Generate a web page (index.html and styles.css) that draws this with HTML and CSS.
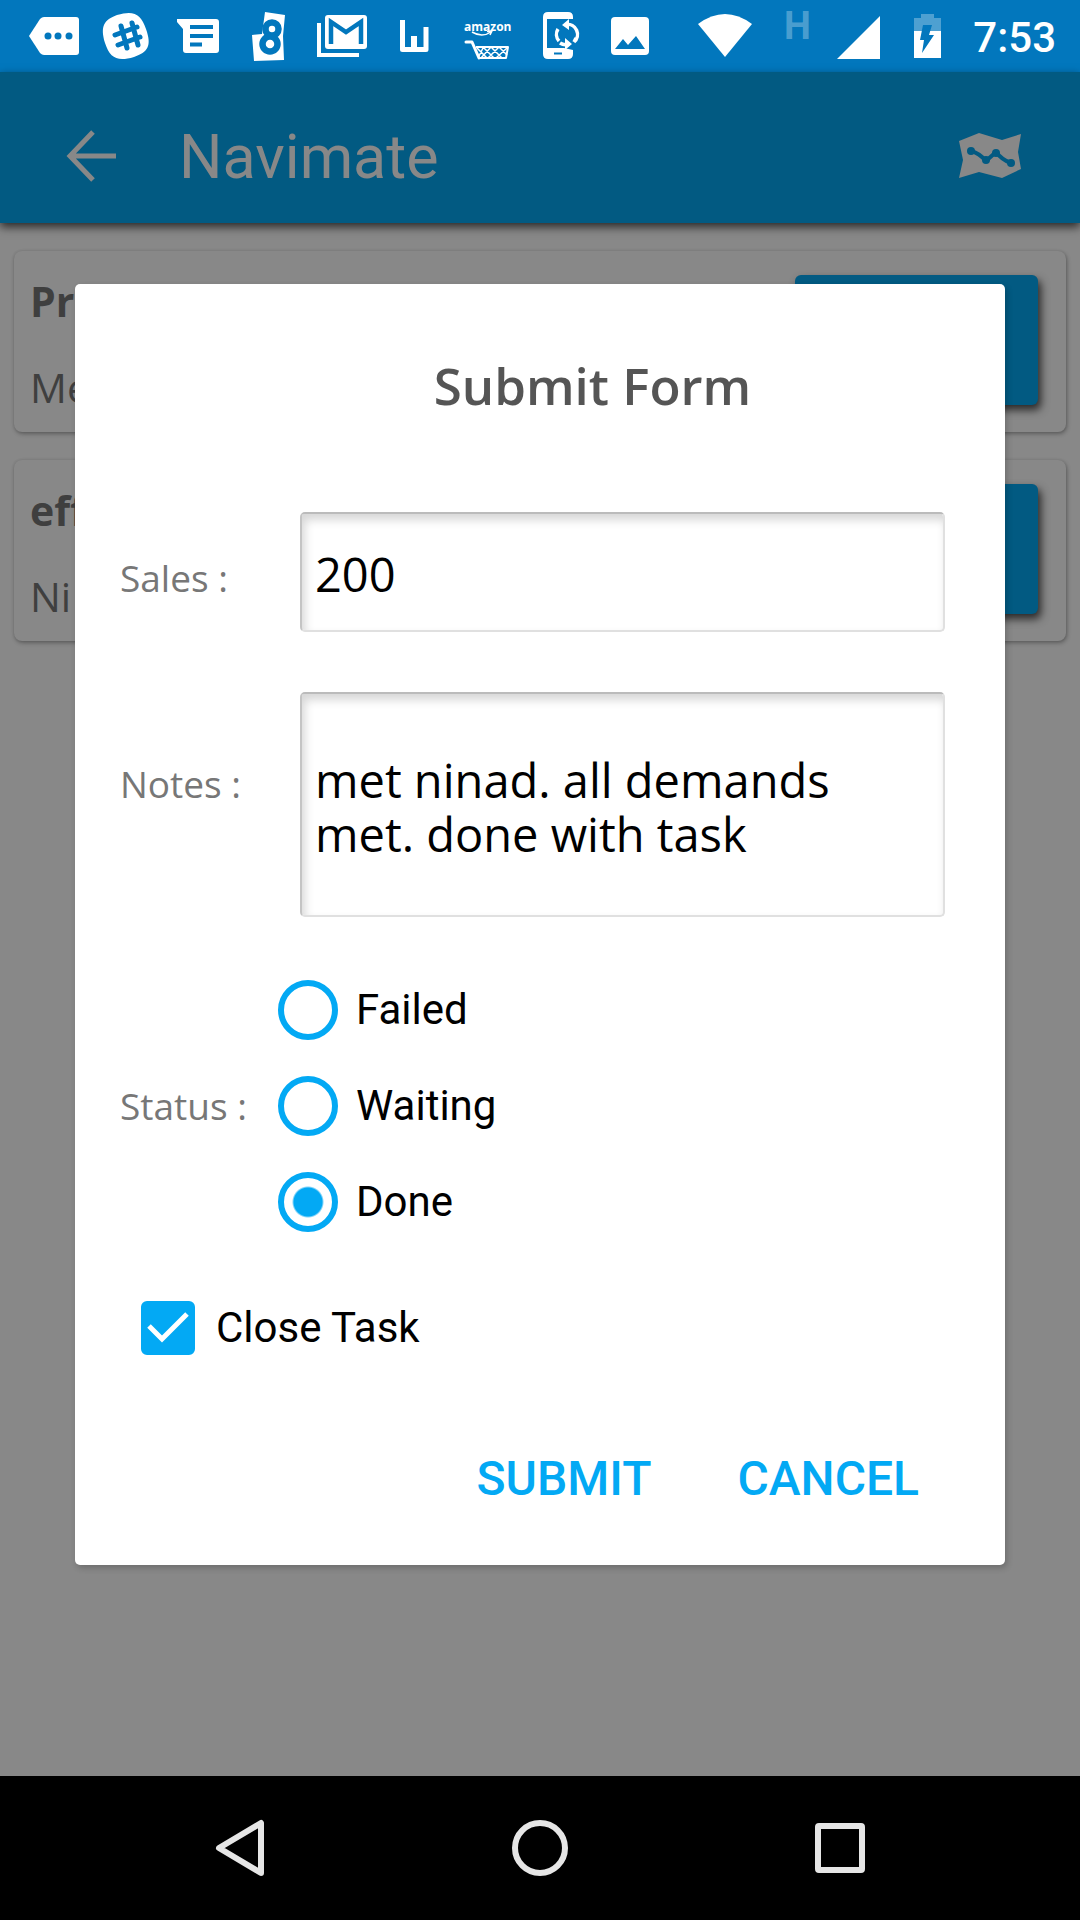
FILE: index.html
```html
<!DOCTYPE html>
<html lang="en">
<head>
<meta charset="utf-8">
<meta name="viewport" content="width=device-width, initial-scale=1">
<title>Navimate</title>
<link rel="stylesheet" href="styles.css">
</head>
<body>
<div class="screen">
  <header class="status-bar">
    <div class="notifications">
      <svg viewBox="0 0 72 72" aria-hidden="true"><path fill="#fff" d="M11 36 22 19q2-2 4-2H58q3 0 3 3V52q0 3-3 3H26q-2 0-4-2z"/><g class="bar-fill"><circle cx="30" cy="36" r="3.500"/><circle cx="40" cy="36" r="3.500"/><circle cx="51" cy="36" r="3.500"/></g></svg>
      <svg viewBox="0 0 72 72" aria-hidden="true"><path fill="#fff" d="M27 15c17-5 24-1 29 14 6 17 2 23-12 28-17 5-24 1-29-14-5-17-1-23 12-28z"/><path class="bar-line" stroke-width="5" stroke-linecap="round" d="M31 26 37 48M42 23 48 45M25 35 47 27M28 45 50 37"/></svg>
      <svg viewBox="0 0 72 72" aria-hidden="true"><path fill="#fff" d="M15 19H54q3 0 3 3V50q0 3-3 3H24q-3 0-3-3V29L15 22z"/><path class="bar-line" stroke-width="4" d="M28 27H51M28 36H51M28 44.500H40"/></svg>
      <svg viewBox="0 0 72 72" aria-hidden="true"><path fill="#fff" d="M31 12 51 15 49 36 50 60 20 61 18 35 28 34z"/><g class="bar-line" stroke-width="6.500"><circle cx="38" cy="29" r="6.500"/><circle cx="36" cy="44" r="7.500"/></g></svg>
      <svg viewBox="0 0 72 72" aria-hidden="true"><path fill="none" stroke="#fff" stroke-width="4" d="M13 23V55H53"/><rect x="19" y="15" width="42" height="34" rx="3" fill="#fff"/><path class="bar-line" stroke-width="4.500" d="M25 44V22L40 32 55 22V44"/></svg>
      <svg viewBox="0 0 72 72" aria-hidden="true"><path fill="none" stroke="#fff" stroke-width="5" stroke-linejoin="round" d="M24.500 20V49.500H48V27"/><path fill="#fff" d="M33 36H39V47H33z"/></svg>
      <svg viewBox="0 0 72 72" aria-hidden="true"><text class="store-name" x="14" y="31" fill="#fff">amazon</text><path fill="none" stroke="#fff" stroke-width="1.500" d="M22 32Q32 38 41 32M37 31.500 42 31 40 35"/><path fill="none" stroke="#fff" stroke-width="3" stroke-linecap="round" stroke-linejoin="round" d="M16 42H22L29 58"/><path fill="none" stroke="#fff" stroke-width="2" stroke-linejoin="round" d="M29 58H56L58 47H26"/><path fill="none" stroke="#fff" stroke-width="1.500" d="M27 48 37 58M33 47 44 58M41 47 52 58M49 47 57 55M33 48 29 56M41 47 31 58M49 47 38 58M57 48 46 58"/></svg>
      <svg viewBox="0 0 72 72" aria-hidden="true"><path fill="#fff" d="M26 12H46q5 0 5 5V19H43V19H25V48H42L51 50V54q0 5-5 5H26q-5 0-5-5V17q0-5 5-5z"/><path class="bar-line" stroke-width="2" d="M32 53.500H40"/><path fill="none" stroke="#fff" stroke-width="3.500" d="M37 41A10 10 0 0 1 36 29M44 24.500A10 10 0 0 1 52 42M46 44.500A10 10 0 0 1 38 43M52 42 54 38"/><path fill="#fff" d="M40 25 47 19V30zM50 44 43 38V50z"/></svg>
      <svg viewBox="0 0 72 72" aria-hidden="true"><rect x="17" y="17" width="38" height="38" rx="4" fill="#fff"/><path class="bar-fill" d="M21 49 29 39 34 45 42 36 51 49z"/></svg>
    </div>
    <div class="system">
      <svg viewBox="0 0 72 72" aria-hidden="true"><path fill="#fff" d="M9 24Q36 4 63 24L36 57z"/></svg>
      <span class="network">H</span>
      <svg class="signal" viewBox="0 0 54 72" aria-hidden="true"><path fill="#fff" d="M47 16V59H4z"/></svg>
      <svg viewBox="0 0 72 72" aria-hidden="true"><path fill="#fff" fill-opacity=".3" d="M27 18H34V14H47V18H54V31H27z"/><path fill="#fff" d="M27 31H54V58H27z"/><path class="bar-fill" d="M36 25H45L42 35H47L35 53 37 40H33z"/></svg>
      <time class="clock">7:53</time>
    </div>
  </header>

  <div class="app">
    <div class="app-bar">
      <button class="icon-button" type="button" aria-label="Back"><svg viewBox="0 0 52 52" width="52" height="52" aria-hidden="true"><path fill="none" stroke="#888" stroke-width="5" d="M51 26H5M28 2 5 26 28 50"/></svg></button>
      <h1 class="app-title">Navimate</h1>
      <button class="icon-button" type="button" aria-label="Map"><svg viewBox="0 0 62 46" width="62" height="46" aria-hidden="true"><path fill="#888" d="M0 8 20 0 43 7 62 1 59 19 62 36 43 45 20 39 0 45 4 27z"/><g fill="none" stroke="#025a82" stroke-width="4" stroke-linejoin="round"><path d="M12 18Q20 20 27 28L37 19Q43 27 52 30"/></g><g fill="#025a82"><circle cx="12" cy="18" r="4"/><circle cx="27" cy="27" r="4"/><circle cx="37" cy="20" r="4"/><circle cx="52" cy="30" r="4"/></g></svg></button>
    </div>
    <main class="tasks">
      <article class="task">
        <div class="task-text"><h2 class="task-name">Pra</h2><p class="task-contact">Me</p></div>
        <button class="task-action" type="button" aria-label="Submit"></button>
      </article>
      <article class="task">
        <div class="task-text"><h2 class="task-name">eff</h2><p class="task-contact">Ni</p></div>
        <button class="task-action" type="button" aria-label="Submit"></button>
      </article>
    </main>

    <div class="overlay">
      <form class="dialog" role="dialog" aria-labelledby="dialog-title">
        <h2 class="dialog-title" id="dialog-title">Submit Form</h2>
        <div class="fields">
          <div class="field field-sales">
            <label class="field-label" for="sales">Sales :</label>
            <input class="field-box" id="sales" type="text" value="200">
          </div>
          <div class="field field-notes">
            <label class="field-label" for="notes">Notes :</label>
            <textarea class="field-box" id="notes" rows="2">met ninad. all demands met. done with task</textarea>
          </div>
        </div>
        <div class="status" role="radiogroup" aria-labelledby="status-label">
          <span class="field-label" id="status-label">Status :</span>
          <div class="options">
            <label class="option"><input class="radio" type="radio" name="status">Failed</label>
            <label class="option"><input class="radio" type="radio" name="status">Waiting</label>
            <label class="option"><input class="radio" type="radio" name="status" checked>Done</label>
          </div>
        </div>
        <label class="option close-task">
          <span class="check"><input class="check-input" type="checkbox" checked><svg class="check-mark" viewBox="0 0 54 54" aria-hidden="true"><path fill="none" stroke="#fff" stroke-width="5" d="M8 25 21 38 46 13"/></svg></span>Close Task
        </label>
        <div class="actions">
          <button class="action" type="submit">SUBMIT</button>
          <button class="action" type="button">CANCEL</button>
        </div>
      </form>
    </div>
  </div>

  <nav class="nav-bar">
    <button class="nav-button" type="button" aria-label="Back"><svg viewBox="0 0 60 60" width="60" height="60" aria-hidden="true"><path fill="none" stroke="#e6e6e6" stroke-width="6" stroke-linejoin="round" d="M51 5V55L9 30z"/></svg></button>
    <button class="nav-button" type="button" aria-label="Home"><svg viewBox="0 0 60 60" width="60" height="60" aria-hidden="true"><circle cx="30" cy="30" r="25" fill="none" stroke="#e6e6e6" stroke-width="6"/></svg></button>
    <button class="nav-button" type="button" aria-label="Recent apps"><svg viewBox="0 0 60 60" width="60" height="60" aria-hidden="true"><rect x="8" y="8" width="44" height="44" rx="1" fill="none" stroke="#e6e6e6" stroke-width="6" stroke-linejoin="round"/></svg></button>
  </nav>
</div>
</body>
</html>
```
FILE: styles.css
```css
:root {
  --bar: #0277bd;
  --accent: #03a9f4;
  --accent-dim: #025a82;
  --surface-dim: #888;
  --text-dim: #3f3f3f;
}

* { box-sizing: border-box; }

body {
  margin: 0;
  font-family: Roboto, sans-serif;
}

h1, h2, p { margin: 0; }

button {
  border: 0;
  padding: 0;
  background: none;
  font-family: inherit;
}

svg { display: block; }

.screen {
  display: flex;
  flex-direction: column;
  min-height: 100vh;
}

/* Status bar */
.status-bar {
  display: flex;
  justify-content: space-between;
  height: 72px;
  padding: 0 24px 0 18px;
  background: var(--bar);
  color: #fff;
}

.notifications, .system { display: flex; }
.status-bar svg { width: 72px; height: 72px; }
.status-bar .signal { width: 54px; }
.bar-fill { fill: var(--bar); }
.bar-line { fill: none; stroke: var(--bar); }
.store-name { font: bold 12px "Open Sans", sans-serif; }

.network {
  width: 72px;
  color: rgba(255, 255, 255, .3);
  font-size: 38px;
  font-weight: 700;
  line-height: 52px;
  text-align: center;
}

.clock {
  padding-left: 14px;
  font-size: 42px;
  font-weight: 500;
  line-height: 75px;
}

/* App behind the dialog */
.app {
  position: relative;
  display: flex;
  flex: 1;
  flex-direction: column;
  background: var(--surface-dim);
}

.app-bar {
  display: flex;
  align-items: center;
  height: 151px;
  padding: 16px 59px 0 65px;
  background: var(--accent-dim);
  box-shadow: 0 4px 9px rgba(0, 0, 0, .7);
}

.app-title {
  flex: 1;
  padding: 2px 0 0 62px;
  color: var(--surface-dim);
  font-size: 61px;
  font-weight: 400;
}

.tasks {
  display: flex;
  flex-direction: column;
  gap: 28px;
  padding: 28px 14px;
}

.task {
  display: flex;
  justify-content: space-between;
  height: 181px;
  padding: 24px 28px 0 16px;
  border-radius: 8px;
  box-shadow: 1px 2px 4px rgba(0, 0, 0, .3), 0 0 3px rgba(0, 0, 0, .1);
}

.task-text {
  color: var(--text-dim);
  font-family: "Open Sans", sans-serif;
  font-size: 41px;
  line-height: 52px;
}

.task-name {
  padding-bottom: 34px;
  font-size: inherit;
  font-weight: 700;
}

.task-action {
  width: 243px;
  height: 130px;
  border-radius: 6px;
  background: var(--accent-dim);
  box-shadow: 3px 5px 9px rgba(0, 0, 0, .7);
}

/* Dialog */
.overlay {
  position: absolute;
  inset: 0;
  display: grid;
  align-items: center;
  padding: 0 75px;
}

.dialog {
  padding: 65px 60px 38px 45px;
  border-radius: 5px;
  background: #fff;
  box-shadow: 2px 3px 6px rgba(0, 0, 0, .2);
}

.dialog-title {
  padding-left: 120px;
  color: #555;
  font-family: "Open Sans", sans-serif;
  font-size: 51px;
  font-weight: 600;
  line-height: 72px;
  text-align: center;
}

.fields {
  display: grid;
  gap: 60px;
  padding: 91px 0 45px;
}

.field {
  display: grid;
  grid-template-columns: 180px 1fr;
  align-items: start;
}

.field-label {
  color: #777;
  font-family: "Open Sans", sans-serif;
  font-size: 37px;
  line-height: 62px;
}

.field-box {
  display: block;
  width: 100%;
  padding: 0 30px 0 13px;
  border: 2px solid #e0e0e0;
  border-top-color: #bbb;
  border-left-color: #c4c4c4;
  border-radius: 5px;
  background: #fff;
  box-shadow: inset 3px 6px 10px rgba(0, 0, 0, .16);
  color: #000;
  font-family: "Open Sans", sans-serif;
  font-size: 47px;
  line-height: 54px;
  resize: none;
  overflow: hidden;
}

.field-sales .field-label { padding-top: 35px; }
.field-sales .field-box { height: 120px; padding-top: 4px; }
.field-notes .field-label { padding-top: 61px; }
.field-notes .field-box { height: 225px; padding-top: 59px; }

.status {
  display: grid;
  grid-template-columns: 158px 1fr;
  align-items: center;
}

.option {
  display: flex;
  align-items: center;
  gap: 18px;
  height: 96px;
  color: #000;
  font-size: 42px;
}

.radio {
  appearance: none;
  width: 60px;
  height: 60px;
  margin: 0;
  border: 6px solid var(--accent);
  border-radius: 50%;
}

.radio:checked {
  background: radial-gradient(circle, var(--accent) 14px, transparent 16px);
}

.close-task {
  gap: 21px;
  margin-top: 30px;
  padding-left: 21px;
}

.check { display: grid; }
.check > * { grid-area: 1 / 1; }

.check-input {
  appearance: none;
  width: 54px;
  height: 54px;
  margin: 0;
  border: 6px solid var(--accent);
  border-radius: 6px;
}

.check-input:checked { background: var(--accent); }

.check-mark {
  width: 54px;
  height: 54px;
  visibility: hidden;
  pointer-events: none;
}

.check-input:checked + .check-mark { visibility: visible; }

.actions {
  display: flex;
  justify-content: flex-end;
  gap: 86px;
  padding: 55px 26px 0 0;
}

.action {
  height: 96px;
  color: var(--accent);
  font-size: 48px;
  font-weight: 500;
}

/* System navigation */
.nav-bar {
  display: flex;
  justify-content: center;
  gap: 240px;
  height: 144px;
  background: #000;
}
```
